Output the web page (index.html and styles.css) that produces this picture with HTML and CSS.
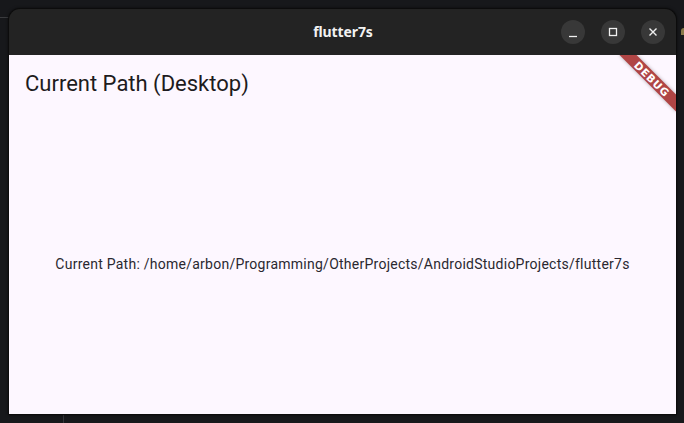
FILE: index.html
```html
<!DOCTYPE html>
<html>
<head>
<meta charset="utf-8">
<link rel="stylesheet" href="styles.css">
</head>
<body>
<div class="desktop">
  <div class="deco-line-left"></div>
  <div class="deco-line-bottom"></div>
  <div class="deco-icon"></div>
  <div class="window">
    <div class="titlebar">
      <div class="title">flutter7s</div>
      <div class="controls">
        <div class="btn">
          <svg width="24" height="24" viewBox="0 0 24 24"><path d="M8 16.5h8" stroke="#f0f0f0" stroke-width="1.3" fill="none"/></svg>
        </div>
        <div class="btn">
          <svg width="24" height="24" viewBox="0 0 24 24"><rect x="8.5" y="8.5" width="7" height="7" stroke="#f0f0f0" stroke-width="1.3" fill="none"/></svg>
        </div>
        <div class="btn">
          <svg width="24" height="24" viewBox="0 0 24 24"><path d="M8.5 8.5l7 7M15.5 8.5l-7 7" stroke="#f0f0f0" stroke-width="1.4" fill="none"/></svg>
        </div>
      </div>
    </div>
    <div class="content">
      <div class="appbar">Current Path (Desktop)</div>
      <div class="body">
        <p class="path">Current Path: /home/arbon/Programming/OtherProjects/AndroidStudioProjects/flutter7s</p>
      </div>
      <div class="banner">DEBUG</div>
    </div>
  </div>
</div>
</body>
</html>
```

FILE: styles.css
```css
html, body {
  margin: 0;
  padding: 0;
  width: 684px;
  height: 423px;
  overflow: hidden;
  background: #17181b;
}

.desktop {
  position: relative;
  width: 684px;
  height: 423px;
  background: #17181b;
}

.deco-line-left {
  position: absolute;
  left: 0;
  top: 17px;
  width: 9px;
  height: 1px;
  background: #3a3b3e;
}

.deco-line-bottom {
  position: absolute;
  left: 63px;
  top: 415px;
  width: 1px;
  height: 8px;
  background: #34353a;
}

.deco-icon {
  position: absolute;
  left: 681px;
  top: 28px;
  width: 6px;
  height: 7px;
  border-radius: 3px 3px 0 0;
  background: #8a7a4a;
}

.window {
  position: absolute;
  left: 8px;
  top: 8px;
  width: 669px;
  height: 407px;
  background: #0c0c0c;
  border-radius: 12px 12px 0 0;
  display: flex;
  flex-direction: column;
  padding: 1px 1px 1px 1px;
  box-sizing: border-box;
  box-shadow: 0 0 3px rgba(0, 0, 0, 0.6);
}

.titlebar {
  height: 46px;
  flex: none;
  background: #232323;
  border-radius: 11px 11px 0 0;
  position: relative;
  display: flex;
  align-items: center;
  justify-content: flex-end;
  padding-right: 11px;
}

.title {
  position: absolute;
  left: 0;
  right: 0;
  top: 0;
  height: 46px;
  line-height: 46px;
  text-align: center;
  color: #f2f2f2;
  font-family: "Noto Sans", "DejaVu Sans", sans-serif;
  font-weight: 700;
  font-size: 14px;
  letter-spacing: -0.1px;
  padding-left: 1px;
}

.controls {
  display: flex;
  gap: 16px;
  position: relative;
}

.btn {
  width: 24px;
  height: 24px;
  border-radius: 50%;
  background: #383838;
  display: flex;
  align-items: center;
  justify-content: center;
}

.btn svg {
  display: block;
}

.content {
  flex: 1;
  background: #fdf7ff;
  position: relative;
  overflow: hidden;
  display: flex;
  flex-direction: column;
  font-family: Roboto, "Noto Sans", sans-serif;
  color: #1d1b20;
}

.appbar {
  height: 64px;
  flex: none;
  display: flex;
  align-items: center;
  padding-left: 16px;
  font-size: 22px;
  font-weight: 400;
  padding-bottom: 7px;
  box-sizing: border-box;
}

.body {
  flex: 1;
  display: flex;
  align-items: center;
  justify-content: center;
  padding-bottom: 6px;
}

.path {
  margin: 0;
  font-size: 14px;
  font-weight: 400;
  letter-spacing: 0.25px;
  color: #2a2830;
}

.banner {
  position: absolute;
  top: 18px;
  right: -16px;
  width: 80px;
  height: 12px;
  line-height: 12px;
  transform: rotate(45deg);
  background: #b04545;
  box-shadow: 0 0 4px rgba(0, 0, 0, 0.3);
  color: #ffffff;
  font-family: "DejaVu Sans", sans-serif;
  font-weight: 700;
  font-size: 10.5px;
  letter-spacing: 0.8px;
  text-align: center;
}
```
